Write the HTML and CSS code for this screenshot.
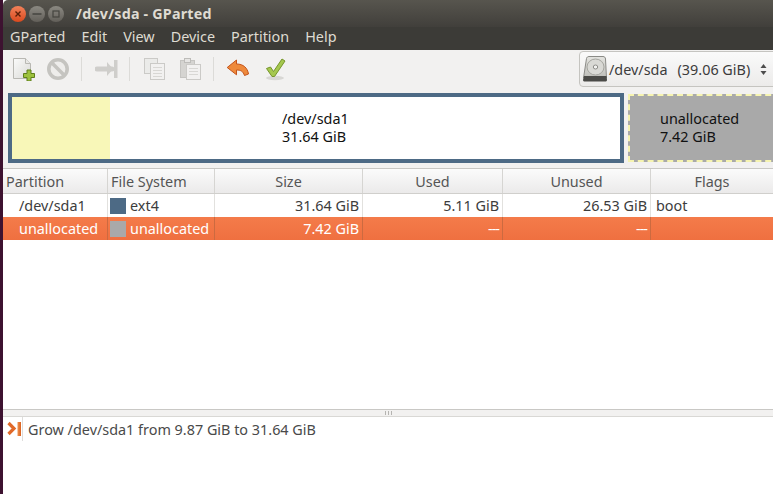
FILE: index.html
```html
<!DOCTYPE html>
<html lang="en">
<head>
<meta charset="utf-8">
<title>/dev/sda - GParted</title>
<link rel="stylesheet" href="styles.css">
</head>
<body>
<div class="strip"></div>
<div class="window">
  <header class="titlebar">
    <div class="winbtns">
      <span class="wb close"><svg width="8" height="8" viewBox="0 0 8 8"><path d="M1.500 1.500l5 5M6.500 1.500l-5 5" stroke="#5a1f08" stroke-width="1.400"/></svg></span>
      <span class="wb"><svg width="10" height="8" viewBox="0 0 10 8"><path d="M0.500 4h9" stroke="#45443f" stroke-width="1.500"/></svg></span>
      <span class="wb"><svg width="8" height="8" viewBox="0 0 8 8"><rect x="1" y="1" width="6" height="6" fill="none" stroke="#45443f" stroke-width="1.200"/></svg></span>
    </div>
    <span class="title">/dev/sda - GParted</span>
  </header>
  <nav class="menubar">
    <span>GParted</span><span>Edit</span><span>View</span><span>Device</span><span>Partition</span><span>Help</span>
  </nav>
  <div class="toolbar">
    <svg class="tool t-new" width="24" height="24" viewBox="0 0 24 24">
      <defs><linearGradient id="pg" x1="0" y1="0" x2="1" y2="1"><stop offset="0" stop-color="#fbfbfa"/><stop offset="1" stop-color="#d9d9d6"/></linearGradient></defs>
      <path d="M1.500 1.500h12l5 5v15h-17z" fill="url(#pg)" stroke="#b9b8b3"/>
      <path d="M13.500 1.500v5h5" fill="#e8e8e5" stroke="#b9b8b3"/>
      <path d="M15 13h4v3.500h3.500v4H19V24h-4v-3.500h-3.500v-4H15z" fill="#9cc13c" stroke="#5f7f1c"/>
    </svg>
    <svg class="tool t-del" width="24" height="24" viewBox="0 0 24 24">
      <circle cx="12" cy="12" r="9.200" fill="#eeedeb" stroke="#c5c4c0" stroke-width="3.600"/>
      <path d="M6 6l12 12" stroke="#c5c4c0" stroke-width="3.600"/>
    </svg>
    <span class="sep s1"></span>
    <svg class="tool t-resize" width="24" height="24" viewBox="0 0 24 24">
      <path d="M2 12h15" stroke="#cfcecb" stroke-width="5" stroke-linecap="round"/>
      <path d="M12 5l6 7-6 7z" fill="#cfcecb"/>
      <rect x="19" y="3" width="3.500" height="18" fill="#cfcecb"/>
    </svg>
    <span class="sep s2"></span>
    <svg class="tool t-copy" width="24" height="24" viewBox="0 0 24 24" fill="#ebebe9" stroke="#cbcac7">
      <rect x="1.500" y="1.500" width="13" height="15"/>
      <rect x="7.500" y="6.500" width="14" height="16" fill="#f2f1f0"/>
      <path d="M10 10.500h9M10 13.500h9M10 16.500h9M10 19.500h9" stroke="#d8d7d4"/>
    </svg>
    <svg class="tool t-paste" width="24" height="24" viewBox="0 0 24 24">
      <rect x="1.500" y="3.500" width="14" height="17" fill="#d5d4d1" stroke="#c5c4c1"/>
      <rect x="5.500" y="1.500" width="6" height="4" fill="#e6e5e3" stroke="#bdbcb9"/>
      <rect x="7.500" y="7.500" width="14" height="15" fill="#f2f1f0" stroke="#cbcac7"/>
      <path d="M10 11.500h9M10 14.500h9M10 17.500h9" stroke="#d8d7d4"/>
    </svg>
    <span class="sep s3"></span>
    <svg class="tool t-undo" width="24" height="24" viewBox="0 0 24 24">
      <path d="M10.500 3L1.200 10.500l9.300 7.300v-4.800c4 0 6.500 1 8 5.500l4-1.500c-1-6-5-10-12-10z" fill="#ee8a3c" stroke="#c4541c" stroke-linejoin="round"/>
    </svg>
    <svg class="tool t-apply" width="24" height="24" viewBox="0 0 24 24">
      <ellipse cx="12" cy="21" rx="9" ry="2.200" fill="#d8d7d4"/>
      <path d="M3.500 11.500l4-1.500 3 4.500L19 2l3 2-10.500 15.500h-2.500z" fill="#a5c84e" stroke="#76952a" stroke-linejoin="round"/>
    </svg>
    <div class="devsel">
      <svg width="24" height="28" viewBox="0 0 24 28">
        <defs><linearGradient id="hd" x1="0" y1="0" x2="0" y2="1"><stop offset="0" stop-color="#e4e4e0"/><stop offset="1" stop-color="#bdbdb8"/></linearGradient></defs>
        <path d="M6 1.500h14c1.500 0 2.500 1 2.500 2.500l1 19h-23l3-19.500c.2-1.200 1.200-2 2.500-2z" fill="url(#hd)" stroke="#8a8a86"/>
        <ellipse cx="12.500" cy="12" rx="8.500" ry="8" fill="#d9d9d5" stroke="#a5a5a0"/>
        <ellipse cx="12.500" cy="12" rx="2.200" ry="2" fill="#f2f2f0" stroke="#8d8d89"/>
        <path d="M1 21h22.500l.5 4c0 1-1 1.500-2 1.500H2c-1 0-2-.5-2-1.500z" fill="#4a4a47"/>
      </svg>
      <span class="devname">/dev/sda</span>
      <span class="devsize">(39.06 GiB)</span>
      <svg class="updown" width="7" height="13" viewBox="0 0 7 13"><path d="M3.500 1L6.500 5H.5zM3.500 12L.5 8h6z" fill="#4c4c4c"/></svg>
    </div>
  </div>
  <section class="diskmap">
    <div class="part-main">
      <div class="used-bar"></div>
      <div class="part-label">/dev/sda1<br>31.64 GiB</div>
    </div>
    <div class="part-free">
      <div class="free-label">unallocated<br>7.42 GiB</div>
    </div>
  </section>
  <div class="table">
    <div class="row head">
      <div class="c c1">Partition</div><div class="c c2">File System</div><div class="c c3 ctr">Size</div><div class="c c4 ctr">Used</div><div class="c c5 ctr">Unused</div><div class="c c6 ctr">Flags</div>
    </div>
    <div class="row body">
      <div class="c c1 ind">/dev/sda1</div><div class="c c2 fs"><i class="sw blue"></i>ext4</div><div class="c c3 rt">31.64 GiB</div><div class="c c4 rt">5.11 GiB</div><div class="c c5 rt">26.53 GiB</div><div class="c c6 flag">boot</div>
    </div>
    <div class="row body sel">
      <div class="c c1 ind">unallocated</div><div class="c c2 fs"><i class="sw grey"></i>unallocated</div><div class="c c3 rt">7.42 GiB</div><div class="c c4 rt dash">---</div><div class="c c5 rt dash">---</div><div class="c c6"></div>
    </div>
  </div>
  <div class="grip"><i></i><i></i><i></i></div>
  <div class="log">
    <div class="logicon"><svg width="15" height="15" viewBox="0 0 15 15"><defs><linearGradient id="lg" x1="0" y1="0" x2="1" y2="0"><stop offset="0" stop-color="#f0914e"/><stop offset="1" stop-color="#d9601f"/></linearGradient></defs><path d="M1.500 2l5.500 5.500L1.500 13" fill="none" stroke="#e0692a" stroke-width="3.200"/><rect x="10.500" y="1" width="3.500" height="14" fill="url(#lg)"/></svg></div>
    <div class="logtext">Grow /dev/sda1 from 9.87 GiB to 31.64 GiB</div>
  </div>
</div>
</body>
</html>
```
FILE: styles.css
```css
* { box-sizing: border-box; }
html, body { margin: 0; height: 100%; }
body {
  display: flex;
  width: 773px;
  height: 494px;
  overflow: hidden;
  font-family: "Noto Sans", sans-serif;
  font-size: 14.400px;
  color: #3c3c3c;
  background: #fff;
}
.strip { width: 3px; background: #3d1230; flex: none; }
.window { flex: 1; min-width: 0; display: flex; flex-direction: column; }
.titlebar {
  height: 27px;
  padding-left: 7px;
  display: flex;
  align-items: center;
  background: linear-gradient(#57554e, #413f3b);
  color: #dfdbd2;
  font-weight: 700;
  border-top-left-radius: 5px;
  flex: none;
}
.winbtns { display: flex; gap: 3px; width: 66px; }
.wb {
  width: 16px; height: 16px; border-radius: 50%;
  background: linear-gradient(#8b8982, #625f59);
  display: flex; align-items: center; justify-content: center;
}
.wb.close { background: linear-gradient(#f2825a, #d9491e); }
.title { font-size: 14.300px; letter-spacing: .2px; }
.menubar {
  height: 23px;
  padding: 0 0 4px 7px;
  display: flex;
  align-items: center;
  gap: 16px;
  background: #3c3b37;
  color: #dfdbd2;
  flex: none;
}
.toolbar {
  height: 38px;
  display: flex;
  align-items: center;
  padding-left: 9px;
  background: #f2f1f0;
  flex: none;
}
.tool { flex: none; }
.t-del { margin-left: 10px; }
.sep { width: 1px; height: 24px; background: #dcdbd8; flex: none; }
.s1 { margin: 0 13px 0 11px; }
.s2 { margin: 0 13px 0 10px; }
.t-copy { margin-right: 12px; }
.s3 { margin: 0 12px 0 10px; }
.t-apply { margin-left: 13px; }
.devsel {
  margin: 0 -8px 0 auto;
  width: 202px;
  height: 36px;
  display: flex;
  align-items: center;
  border: 1px solid #c5c4c0;
  border-radius: 4px;
  padding-left: 3px;
  background: linear-gradient(#fafafa, #ecebea);
  white-space: nowrap;
  color: #3c3c3c;
  flex: none;
}
.devname { margin-left: 2px; }
.devsize { margin-left: 10px; }
.updown { margin-left: 10px; flex: none; }
.diskmap {
  height: 80px;
  padding: 5px 0 5px 5px;
  display: flex;
  gap: 4px;
  background: #f2f1f0;
  flex: none;
}
.part-main {
  width: 616px;
  border: 4px solid #4d6a85;
  background: #fff;
  display: flex;
  position: relative;
  justify-content: center;
  align-items: center;
}
.used-bar { position: absolute; left: 0; top: 0; bottom: 0; width: 98px; background: #f8f7b8; }
.part-label, .free-label { color: #111; line-height: 18px; position: relative; white-space: nowrap; }
.part-main .part-label { width: 68px; }
.part-free {
  flex: 1;
  margin: 1px -8px 1px 0;
  background: #a9a9a9;
  border: 2px dashed #f6f4b0;
  display: flex;
  align-items: center;
  padding-left: 30px;
}
.table { flex: 1; display: flex; flex-direction: column; background: #fff; border-top: 1px solid #c8c7c4; }
.row { display: flex; flex: none; }
.head {
  height: 25px;
  background: linear-gradient(#fbfbfb, #ebeaea);
  border-bottom: 1px solid #d0cfcc;
  color: #555;
}
.body { height: 23px; }
.c { display: flex; align-items: center; padding: 0 3px; white-space: nowrap; border-right: 1px solid #e2e1de; }
.head .c { border-right-color: #d6d5d2; }
.c1 { width: 105px; }
.c2 { width: 107px; }
.c3 { width: 148px; }
.c4 { width: 140px; }
.c5 { width: 148px; }
.c6 { flex: 1; border-right: 0; }
.ctr { justify-content: center; }
.rt { justify-content: flex-end; }
.ind { padding-left: 16px; }
.fs { padding-left: 2px; gap: 4px; }
.flag { padding-left: 5px; }
.sw { width: 16px; height: 16px; flex: none; }
.blue { background: #4d6a85; }
.grey { background: #a9a9a9; }
.sel { background: linear-gradient(#f47b4a, #ef7040); color: #fff; }
.sel .c { border-right-color: #cc6a40; }
.dash { letter-spacing: -1px; }
.grip {
  height: 8px;
  background: #f2f1f0;
  border-top: 1px solid #c9c8c5;
  border-bottom: 1px solid #d9d8d5;
  display: flex;
  justify-content: center;
  align-items: center;
  gap: 2px;
  flex: none;
}
.grip i { width: 1px; height: 4px; background: #b5b4b1; }
.log { height: 77px; display: flex; align-items: flex-start; flex: none; background: #fff; }
.logicon { width: 20px; height: 24px; padding: 4px 0 0 4px; border-right: 1px solid #dedddb; flex: none; }
.logtext { padding: 3px 0 0 5px; color: #4a4a4a; }
```
